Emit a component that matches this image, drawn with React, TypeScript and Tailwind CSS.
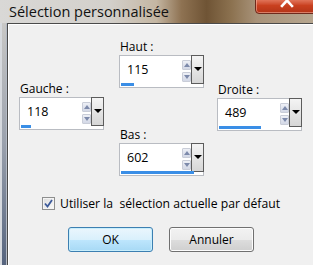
import React from 'react';

const FONT = { fontFamily: '"Segoe UI", "Open Sans", "Liberation Sans", sans-serif' };

type SpinProps = { label: string; value: string; fill: number };

function SpinBox({ label, value, fill }: SpinProps) {
  return (
    <div className="flex flex-col w-[85px]">
      <div className="h-[16px] pl-[1px] text-[12px] leading-[16px] text-black">{label}</div>
      <div className="relative h-[33px] w-[85px] border border-[#b9bcc2] bg-white">
        <span className="absolute left-[7px] top-[6px] text-[12.5px] leading-[16px] text-black">{value}</span>
        {/* spinner */}
        <div className="absolute left-[62px] top-[4px] flex flex-col gap-[2px]">
          <div className="flex h-[10px] w-[9px] items-center justify-center rounded-[1px] border border-[#c9cdd8] bg-gradient-to-b from-[#eef0f6] to-[#d3d8e6]">
            <div className="h-0 w-0 border-x-[3px] border-b-[4px] border-x-transparent border-b-[#7d8aab]" />
          </div>
          <div className="flex h-[10px] w-[9px] items-center justify-center rounded-[1px] border border-[#c9cdd8] bg-gradient-to-b from-[#eef0f6] to-[#d3d8e6]">
            <div className="h-0 w-0 border-x-[3px] border-t-[4px] border-x-transparent border-t-[#7d8aab]" />
          </div>
        </div>
        {/* dropdown */}
        <div className="absolute -top-px left-[71px] flex h-[29px] w-[13px] justify-center border border-[#5c5c5c] bg-gradient-to-b from-[#f4f4f4] to-[#d6d6d6] pt-[11px]">
          <div className="h-0 w-0 border-x-[4px] border-t-[4px] border-x-transparent border-t-black" />
        </div>
        {/* value bar */}
        <div className="absolute bottom-[1px] left-[1px] h-[3px] bg-[#3a8ee6]" style={{ width: fill }} />
      </div>
    </div>
  );
}

export default function App() {
  return (
    <div className="relative h-[265px] w-[313px] overflow-hidden select-none" style={FONT}>
      {/* title bar */}
      <div className="relative h-[23px] bg-[linear-gradient(90deg,#d9d8d6_0%,#d3d0cb_35%,#c4b6a2_50%,#8e7252_58%,#6f5435_66%,#8c7250_74%,#a8937a_82%,#b6a68f_100%)]">
        <span className="absolute left-[9px] top-[2px] text-[14.5px] leading-[20px] text-[#111]">Sélection personnalisée</span>
        <div className="absolute -top-[3px] left-[255px] h-[17px] w-[64px] rounded-b-[4px] border border-[#6e2a1c] bg-gradient-to-b from-[#e8846a] via-[#c9401f] to-[#b33418] shadow-[inset_0_0_0_1px_rgba(255,200,180,0.5)]">
          <svg className="absolute left-[24px] top-[0px]" width="14" height="10" viewBox="0 0 14 10">
            <path d="M2 -3 L12 8 M12 -3 L2 8" stroke="#ffffff" strokeWidth="2.6" strokeLinecap="square" />
          </svg>
        </div>
      </div>

      {/* body */}
      <div className="flex h-[242px]">
        <div className="w-[7px] bg-gradient-to-b from-[#c9c8c6] via-[#9aa1ad] to-[#56647e] shadow-[inset_2px_0_0_#d6d9de,inset_-1px_0_0_#b4bac4]" />
        <div className="flex-1 border-l border-t border-[#4a4a4a] bg-[#f0f0f0] shadow-[inset_1px_1px_0_#ffffff]">
          <div className="flex pl-[11px] pt-[15px]">
            <div className="mt-[42px]">
              <SpinBox label="Gauche :" value="118" fill={10} />
            </div>
            <div className="ml-[15px] flex flex-col">
              <SpinBox label="Haut :" value="115" fill={13} />
              <div className="h-[39px]" />
              <SpinBox label="Bas :" value="602" fill={73} />
            </div>
            <div className="ml-[13px] mt-[43px]">
              <SpinBox label="Droite :" value="489" fill={42} />
            </div>
          </div>

          <div className="mt-[20px] flex items-center pl-[34px]">
            <div className="flex h-[13px] w-[13px] items-center justify-center border border-[#8e8f8f] bg-gradient-to-br from-[#dcdcdc] to-[#fbfbfb] shadow-[inset_0_0_0_1px_#f4f4f4]">
              <svg width="9" height="9" viewBox="0 0 9 9">
                <path d="M1 4.5 L3.5 7.5 L8 1" fill="none" stroke="#3c5a9a" strokeWidth="1.8" />
              </svg>
            </div>
            <span className="ml-[5px] whitespace-pre text-[12.2px] leading-[15px] text-black">Utiliser la  sélection actuelle par défaut</span>
          </div>

          <div className="mt-[16px] flex pl-[60px]">
            <button className="h-[25px] w-[85px] rounded-[3px] border border-[#3c7fb1] bg-[linear-gradient(180deg,#eaf6fd_0%,#d9f0fc_50%,#bee6fd_51%,#a7d9f5_100%)] text-[12px] text-black shadow-[inset_0_0_0_1px_#c8eefc]">
              OK
            </button>
            <button className="ml-[16px] h-[25px] w-[85px] rounded-[3px] border border-[#707070] bg-[linear-gradient(180deg,#f2f2f2_0%,#ebebeb_50%,#dddddd_51%,#cfcfcf_100%)] text-[12px] text-black shadow-[inset_0_0_0_1px_#fcfcfc]">
              Annuler
            </button>
          </div>
        </div>
      </div>
    </div>
  );
}
